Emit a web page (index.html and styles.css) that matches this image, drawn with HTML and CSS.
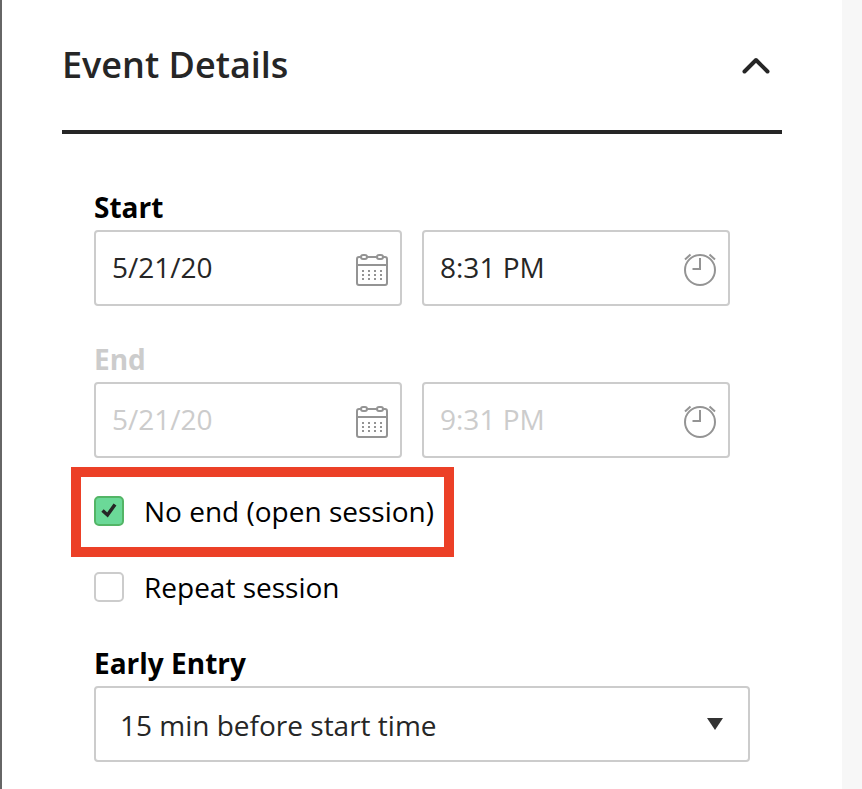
FILE: index.html
```html
<!DOCTYPE html>
<html lang="en">
<head>
<meta charset="utf-8">
<meta name="viewport" content="width=device-width, initial-scale=1">
<title>Event Details</title>
<link rel="stylesheet" href="styles.css">
</head>
<body>
<svg class="symbols" aria-hidden="true">
  <symbol id="calendar" viewBox="0 0 32 34">
    <g fill="none" stroke="currentColor" stroke-width="2">
      <path d="M5 5H3a2 2 0 0 0-2 2v24a2 2 0 0 0 2 2h26a2 2 0 0 0 2-2V7a2 2 0 0 0-2-2h-2M11 5h10M1 13h30"/>
      <rect x="5" y="3" width="6" height="4" rx="2"/>
      <rect x="21" y="3" width="6" height="4" rx="2"/>
      <path d="M6 19h20M6 23h20M6 27h20" stroke-dasharray="2 4"/>
    </g>
  </symbol>
  <symbol id="clock" viewBox="0 0 32 34">
    <g fill="none" stroke="currentColor" stroke-width="2">
      <circle cx="16" cy="18" r="15"/>
      <path d="M16 6v11H8.500M1 7.500l5.500-5M31 7.500l-5.500-5"/>
    </g>
  </symbol>
</svg>
<main class="panel">
  <header class="panel-header">
    <h1 class="title">Event Details</h1>
    <button class="toggle" type="button" aria-label="Collapse event details" aria-expanded="true">
      <svg viewBox="0 0 28 18" width="28" height="18" fill="none" stroke="currentColor" stroke-width="4" stroke-linecap="round" stroke-linejoin="round" aria-hidden="true"><path d="M2.500 15.500 14 4 25.500 15.500"/></svg>
    </button>
  </header>
  <form class="details">
    <div class="group">
      <label class="label" for="start-date">Start</label>
      <div class="pair">
        <div class="field">
          <input class="input" id="start-date" type="text" value="5/21/20">
          <svg class="icon" aria-hidden="true"><use href="#calendar"/></svg>
        </div>
        <div class="field">
          <input class="input" type="text" value="8:31 PM" aria-label="Start time">
          <svg class="icon" aria-hidden="true"><use href="#clock"/></svg>
        </div>
      </div>
    </div>
    <div class="group">
      <label class="label label-disabled" for="end-date">End</label>
      <div class="pair">
        <div class="field">
          <input class="input" id="end-date" type="text" value="5/21/20" disabled>
          <svg class="icon" aria-hidden="true"><use href="#calendar"/></svg>
        </div>
        <div class="field">
          <input class="input" type="text" value="9:31 PM" aria-label="End time" disabled>
          <svg class="icon" aria-hidden="true"><use href="#clock"/></svg>
        </div>
      </div>
    </div>
    <div class="checks">
      <label class="check highlighted">
        <span class="box">
          <input class="tick" type="checkbox" checked>
          <svg class="mark" viewBox="0 0 30 30" fill="none" stroke="#262626" stroke-width="3.500" aria-hidden="true"><path d="M8.500 14.500 13.500 19 21 8.500"/></svg>
        </span>
        No end (open session)
      </label>
      <label class="check">
        <span class="box"><input class="tick" type="checkbox"></span>
        Repeat session
      </label>
    </div>
    <label class="label" for="early-entry">Early Entry</label>
    <div class="select-field">
      <select class="select" id="early-entry">
        <option>15 min before start time</option>
      </select>
      <svg class="arrow" viewBox="0 0 16 12" width="16" height="12" aria-hidden="true"><path d="M0 0h16L8 12z" fill="#333"/></svg>
    </div>
  </form>
</main>
</body>
</html>
```
FILE: styles.css
```css
* {
  box-sizing: border-box;
}

body {
  margin: 0;
  background: #f7f7f7;
  color: #000;
  font: 28px/40px "Open Sans", "Noto Sans", sans-serif;
}

.symbols {
  position: absolute;
  width: 0;
  height: 0;
}

.panel {
  min-height: 100vh;
  margin-right: 20px;
  padding: 0 60px 24px;
  border-left: 2px solid #666;
  background: #fff;
}

.panel-header {
  display: flex;
  align-items: center;
  justify-content: space-between;
  padding: 40px 12px 40px 0;
  border-bottom: 4px solid #262626;
  color: #262626;
}

.title {
  margin: 0;
  font-size: 36px;
  font-weight: 600;
  line-height: 50px;
}

.toggle {
  display: flex;
  padding: 0;
  border: 0;
  background: none;
  color: inherit;
}

.details {
  padding: 52px 32px 0;
}

.group {
  margin-bottom: 32px;
  padding-right: 20px;
}

.label {
  display: block;
  padding-bottom: 2px;
  font-weight: 700;
  line-height: 42px;
}

.label-disabled {
  color: #ccc;
}

.pair {
  display: grid;
  grid-template-columns: 1fr 1fr;
  gap: 20px;
}

.field,
.select-field {
  position: relative;
}

.input,
.select {
  display: block;
  width: 100%;
  height: 76px;
  border: 2px solid #ccc;
  border-radius: 4px;
  background: #fff;
  color: #262626;
  font: inherit;
}

.input {
  padding: 0 60px 2px 16px;
}

.input:disabled {
  color: #ccc;
}

.icon {
  position: absolute;
  top: 22px;
  right: 14px;
  width: 32px;
  height: 34px;
  color: #949494;
  pointer-events: none;
}

.checks {
  display: flex;
  flex-direction: column;
  align-items: flex-start;
  margin: -16px 0 16px;
}

.check {
  position: relative;
  display: flex;
  align-items: center;
  gap: 20px;
  height: 76px;
  padding-bottom: 2px;
}

.highlighted::after {
  content: "";
  position: absolute;
  inset: -7px -20px -7px -23px;
  border: 10px solid #ec4027;
  pointer-events: none;
}

.box {
  position: relative;
  display: flex;
}

.tick {
  width: 30px;
  height: 30px;
  margin: 0;
  border: 2px solid #ccc;
  border-radius: 5px;
  background: #fff;
  appearance: none;
}

.tick:checked {
  border-color: #53b566;
  background: #6bd998;
}

.mark {
  position: absolute;
  inset: 0;
  pointer-events: none;
}

.select {
  padding: 2px 60px 0 24px;
  appearance: none;
}

.arrow {
  position: absolute;
  top: 32px;
  right: 27px;
  pointer-events: none;
}
```
